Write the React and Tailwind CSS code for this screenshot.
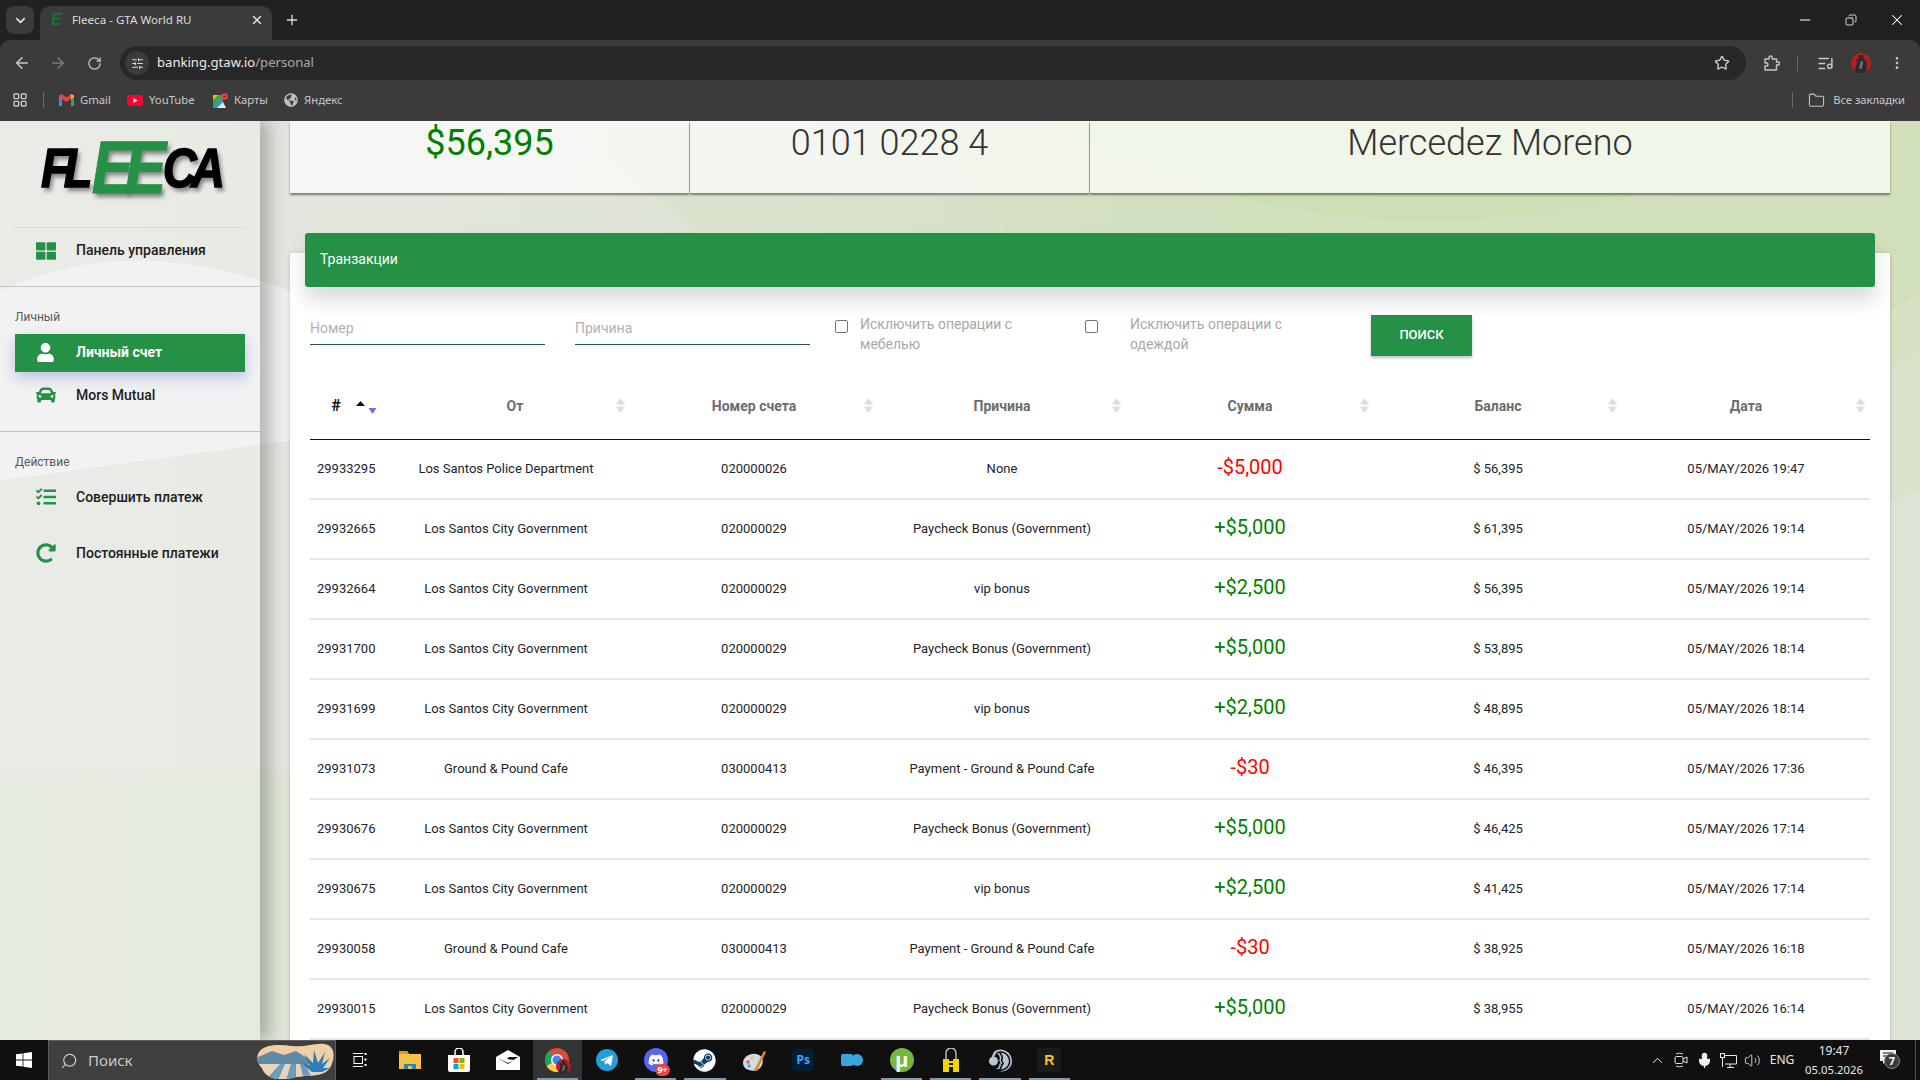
import {
  ArrowLeft, ArrowRight, RotateCw, Star, EllipsisVertical, X, Plus, ChevronDown, ChevronUp,
  SlidersHorizontal, LayoutGrid, Folder, ListMusic, Minus, Search, Mic, Volume2, Copy,
} from 'lucide-react';
import { FaUser, FaCar, FaTasks, FaRedoAlt, FaThLarge, FaDiscord, FaSteam, FaGlobeAmericas } from 'react-icons/fa';
import { SiTeamspeak } from 'react-icons/si';

const GOV = 'Los Santos City Government';
const CAFE = 'Ground & Pound Cafe';
const PAY = 'Paycheck Bonus (Government)';
const BUY = 'Payment - Ground & Pound Cafe';

const rows = [
  ['29933295', 'Los Santos Police Department', '020000026', 'None', '-$5,000', '$ 56,395', '05/MAY/2026 19:47'],
  ['29932665', GOV, '020000029', PAY, '+$5,000', '$ 61,395', '05/MAY/2026 19:14'],
  ['29932664', GOV, '020000029', 'vip bonus', '+$2,500', '$ 56,395', '05/MAY/2026 19:14'],
  ['29931700', GOV, '020000029', PAY, '+$5,000', '$ 53,895', '05/MAY/2026 18:14'],
  ['29931699', GOV, '020000029', 'vip bonus', '+$2,500', '$ 48,895', '05/MAY/2026 18:14'],
  ['29931073', CAFE, '030000413', BUY, '-$30', '$ 46,395', '05/MAY/2026 17:36'],
  ['29930676', GOV, '020000029', PAY, '+$5,000', '$ 46,425', '05/MAY/2026 17:14'],
  ['29930675', GOV, '020000029', 'vip bonus', '+$2,500', '$ 41,425', '05/MAY/2026 17:14'],
  ['29930058', CAFE, '030000413', BUY, '-$30', '$ 38,925', '05/MAY/2026 16:18'],
  ['29930015', GOV, '020000029', PAY, '+$5,000', '$ 38,955', '05/MAY/2026 16:14'],
];

function Bookmark({ icon, label, className }) {
  return (
    <div className={`flex items-center gap-[6px] ${className}`}>
      {icon}
      <span className="text-[11.3px] text-[#c8c8c8]">{label}</span>
    </div>
  );
}

function GmailIcon() {
  return (
    <svg width="15" height="12" viewBox="0 0 15 12">
      <path d="M0 2v10h3V4z" fill="#4285f4" />
      <path d="M15 2v10h-3V4z" fill="#34a853" />
      <path d="M0 1.5 3 0l4.5 3.6L12 0l3 1.5V3L7.5 8 0 3z" fill="#ea4335" />
      <path d="M12 0l3 1.5V3l-3 2z" fill="#fbbc04" />
    </svg>
  );
}

function YoutubeIcon() {
  return (
    <svg width="16" height="11" viewBox="0 0 16 11">
      <rect width="16" height="11" rx="3" fill="#ff0033" />
      <path d="M6.3 3v5l4.2-2.5z" fill="#fff" />
    </svg>
  );
}

function MapsIcon() {
  return (
    <svg width="15" height="15" viewBox="0 0 15 15">
      <path d="M0 2h10v13H0z" fill="#34a853" />
      <path d="M0 15 10 5v10z" fill="#4285f4" />
      <path d="M0 2h5L0 7z" fill="#fbbc04" />
      <path d="M4 15 10 9l3 6z" fill="#e8eaed" />
      <circle cx="11.5" cy="3.5" r="3.3" fill="#ea4335" />
      <circle cx="11.5" cy="3.5" r="1.1" fill="#8f1c14" />
    </svg>
  );
}

function Avatar({ size = 20 }) {
  return (
    <svg width={size} height={size} viewBox="0 0 20 20">
      <circle cx="10" cy="10" r="10" fill="#b3201f" />
      <path d="M8 2h4l1 4 3 3-1 9-3 2H6l-2-3 2-8-1-3 3-1z" fill="#2b2b2d" />
      <path d="M10 8l2 1-1 6-3 1z" fill="#77777a" />
    </svg>
  );
}

function ExtensionIcon() {
  return (
    <svg width="16" height="16" viewBox="0 0 16 16" fill="none" stroke="#c8c8c8" strokeWidth="1.4" strokeLinejoin="round">
      <path d="M1 4H5V2.6A1.6 1.6 0 0 1 8.2 2.6V4H12.5V7H14A1.5 1.5 0 0 1 14 10H12.5V15H1V11H2.5A1.5 1.5 0 0 0 2.5 8H1z" />
    </svg>
  );
}

function BrowserChrome() {
  return (
    <div className="flex h-[121px] flex-col bg-[#202222] font-['Noto_Sans',sans-serif]">
      {/* Tabs */}
      <div className="flex h-[40px] items-end pl-[6px]">
        <div className="mb-[6px] flex h-[28px] w-[28px] items-center justify-center rounded-[8px] bg-[#3b3b3b]">
          <ChevronDown size={15} strokeWidth={2.5} color="#e4e4e4" />
        </div>
        <div className="ml-[6px] flex h-[34px] w-[232px] items-center rounded-t-[10px] bg-[#3b3b3b] pb-[6px] pl-[11px] pr-[8px]">
          <span className="w-[21px] font-['Liberation_Sans',sans-serif] text-[16px] font-bold italic leading-none text-[#13782f]">E</span>
          <span className="flex-1 text-[11.6px] text-[#dddddd]">Fleeca - GTA World RU</span>
          <X size={14} strokeWidth={2.5} color="#e0e0e0" />
        </div>
        <div className="mb-[12px] ml-[12px] flex h-[16px] w-[16px] items-center justify-center">
          <Plus size={16} strokeWidth={2} color="#d8d8d8" />
        </div>
        <div className="mb-[11px] ml-auto flex h-[18px] items-center">
          <div className="flex w-[46px] justify-center"><Minus size={16} strokeWidth={1.5} color="#ffffff" /></div>
          <div className="flex w-[46px] justify-center"><Copy size={12} strokeWidth={1.6} color="#ffffff" className="-scale-x-100" /></div>
          <div className="flex w-[46px] justify-center"><X size={18} strokeWidth={1.4} color="#ffffff" /></div>
        </div>
      </div>
      {/* Toolbar */}
      <div className="flex h-[40px] items-end rounded-t-[10px] bg-[#3b3b3b] pl-[13px]">
        <div className="flex h-[34px] items-center">
          <ArrowLeft size={18} color="#c8c8c8" />
          <ArrowRight size={18} color="#7b7b7b" className="ml-[18px]" />
          <RotateCw size={15} color="#c8c8c8" className="ml-[20px]" />
        </div>
        <div className="ml-[18px] flex h-[34px] w-[1626px] items-center rounded-full bg-[#282828] pl-[5px] pr-[16px]">
          <div className="flex h-[24px] w-[24px] items-center justify-center rounded-full bg-[#3b3b3b]">
            <SlidersHorizontal size={13} color="#d8d8d8" />
          </div>
          <span className="ml-[8px] text-[13.1px] text-[#e8e8e8]">banking.gtaw.io<span className="text-[#a8a8a8]">/personal</span></span>
          <Star size={16} color="#d0d0d0" className="ml-auto" />
        </div>
        <div className="flex h-[34px] items-center">
          <div className="ml-[18px]"><ExtensionIcon /></div>
          <div className="ml-[17px] h-[16px] w-px bg-[#6a6a6a]" />
          <ListMusic size={17} color="#c8c8c8" className="ml-[19px]" />
          <div className="ml-[17px]"><Avatar /></div>
          <EllipsisVertical size={16} color="#c8c8c8" className="ml-[18px]" />
        </div>
      </div>
      {/* Bookmarks */}
      <div className="flex h-[41px] items-center bg-[#3b3b3b] pb-px pl-[12px] pr-[15px]">
        <LayoutGrid size={16} color="#c8c8c8" />
        <div className="ml-[15px] h-[16px] w-px bg-[#6a6a6a]" />
        <Bookmark icon={<GmailIcon />} label="Gmail" className="ml-[15px] w-[68px]" />
        <Bookmark icon={<YoutubeIcon />} label="YouTube" className="w-[86px]" />
        <Bookmark icon={<MapsIcon />} label="Карты" className="w-[71px]" />
        <Bookmark icon={<FaGlobeAmericas size={14} color="#c0c0c0" />} label="Яндекс" />
        <div className="ml-auto h-[16px] w-px bg-[#6a6a6a]" />
        <Folder size={17} strokeWidth={1.5} color="#c8c8c8" className="ml-[15px]" />
        <span className="ml-[8px] text-[11.2px] text-[#c8c8c8]">Все закладки</span>
      </div>
    </div>
  );
}

function PageBackground() {
  return (
    <svg className="absolute inset-0 h-full w-full" viewBox="0 0 1920 920" preserveAspectRatio="none">
      <defs>
        <linearGradient id="bgA" x1="0" x2="1" y1="0" y2="0">
          <stop offset="0" stopColor="#e5e6e1" />
          <stop offset="0.3" stopColor="#e0e5d9" />
          <stop offset="0.65" stopColor="#d4e0c2" />
          <stop offset="1" stopColor="#d0dfb9" />
        </linearGradient>
      </defs>
      <rect width="1920" height="920" fill="url(#bgA)" />
      <path d="M560 0 700 113V920H1920V0z" fill="#d4e0c4" opacity="0.35" />
      <path d="M900 0 1010 113V920H1920V0z" fill="#d0dfb8" opacity="0.35" />
      <circle cx="1430" cy="-700" r="800" fill="#c9e0ad" opacity="0.65" />
      <path d="M1890 190 1920 175V920H1890z" fill="#ffffff" opacity="0.12" />
      <path d="M1890 245 1920 235V920H1890z" fill="#dfe5d6" opacity="0.4" />
      <path d="M1890 380 1920 370V920H1890z" fill="#e2e6dd" opacity="0.6" />
      <path d="M0 170Q130 110 290 170V320L0 360z" fill="#efefef" />
      <path d="M0 653H290V920H0z" fill="#dbe6cf" opacity="0.5" />
    </svg>
  );
}

function Logo() {
  return (
    <div className="flex h-[106px] origin-center scale-x-[0.84] items-center justify-center pb-[12px] font-['Liberation_Sans',sans-serif] font-bold italic [text-shadow:3px_4px_5px_rgba(0,0,0,0.45)]">
      <span className="text-[56px] leading-none tracking-[-7px] text-black [-webkit-text-stroke:1.5px_#000]">FL</span>
      <span className="ml-[6px] text-[74px] leading-none tracking-[-10px] text-[#259147] [-webkit-text-stroke:1px_#259147]">EE</span>
      <span className="ml-[6px] text-[56px] leading-none tracking-[-7px] text-black [-webkit-text-stroke:1.5px_#000]">CA</span>
    </div>
  );
}

function NavItem({ icon, label, height, active }) {
  return (
    <div
      className={`mx-[15px] flex items-center pl-[21px] text-[14px] ${height} ${
        active
          ? 'bg-[#259147] pb-px font-bold text-white shadow-[0_6px_14px_rgba(60,90,200,0.3)]'
          : 'font-medium text-[#212121]'
      }`}
    >
      <span className={`flex w-[40px] ${active ? 'text-white' : 'text-[#259147]'}`}>{icon}</span>
      {label}
    </div>
  );
}

function Sidebar() {
  return (
    <aside className="relative w-[260px] shrink-0 bg-white/20 shadow-[10px_0_14px_rgba(60,70,55,0.32)]">
      <Logo />
      <div className="mx-[15px] h-px bg-[#d8d8d4]" />
      <NavItem icon={<FaThLarge size={20} />} label="Панель управления" height="h-[45px]" />
      <div className="mt-[13px] h-px bg-[#c4c4c4]" />
      <p className="ml-[15px] mt-[22px] h-[16px] text-[12px] leading-[16px] text-[#5a5a5a]">Личный</p>
      <div className="mt-[9px]" />
      <NavItem icon={<FaUser size={19} />} label="Личный счет" height="h-[38px]" active />
      <NavItem icon={<FaCar size={20} />} label="Mors Mutual" height="h-[46px]" />
      <div className="mt-[13px] h-px bg-[#c4c4c4]" />
      <p className="ml-[15px] mt-[22px] h-[16px] text-[12px] leading-[16px] text-[#5a5a5a]">Действие</p>
      <NavItem icon={<FaTasks size={20} />} label="Совершить платеж" height="h-[54px]" />
      <NavItem icon={<FaRedoAlt size={20} />} label="Постоянные платежи" height="h-[58px]" />
    </aside>
  );
}

function SortIcon({ active }) {
  if (active) {
    return (
      <svg width="21" height="15" viewBox="0 0 21 15" className="absolute right-[5px] top-[26px]">
        <path d="M0 6 4.5 1 9 6z" fill="#111" />
        <path d="M12.5 8h8l-4 6z" fill="#6f74d8" />
      </svg>
    );
  }
  return (
    <svg width="9" height="15" viewBox="0 0 9 15" className="absolute right-[5px] top-[24px]">
      <path d="M0 6.5 4.5 0 9 6.5z" fill="#dcdcdc" />
      <path d="M0 8.5h9L4.5 15z" fill="#dcdcdc" />
    </svg>
  );
}

function Head({ children, className = '' }) {
  return (
    <th className={`relative h-[66px] border-b-[1.5px] border-[#111] p-0 pb-px text-center text-[14px] font-bold text-[#6c6c6c] ${className}`}>
      {children}
      <SortIcon />
    </th>
  );
}

function Filters() {
  const field = 'h-[31px] w-[235px] border-b border-[#1f5a3c] bg-transparent pb-[2px] text-[14px] outline-none placeholder:text-[#b2b2b2]';
  const box = 'mt-[6px] h-[13px] w-[13px] shrink-0 rounded-[2px] border border-[#767676] bg-white';
  const text = 'text-[14px] leading-[20px] text-[#a8a8a8]';
  return (
    <div className="mt-[27px] flex items-start px-[20px]">
      <input className={field} placeholder="Номер" />
      <input className={`${field} ml-[30px]`} placeholder="Причина" />
      <div className={`${box} ml-[25px]`} />
      <p className={`${text} ml-[12px] w-[213px]`}>Исключить операции с<br />мебелью</p>
      <div className={`${box} ml-[12px]`} />
      <p className={`${text} ml-[32px] w-[241px]`}>Исключить операции с<br />одеждой</p>
      <button className="mt-px h-[41px] w-[101px] bg-[#259147] pb-px text-[13px] font-medium text-white shadow-[0_2px_3px_rgba(0,0,0,0.25)]">
        ПОИСК
      </button>
    </div>
  );
}

function TransactionsTable() {
  const cell = 'h-[60px] border-b-2 border-[#e5e5e5]';
  return (
    <table className="ml-[20px] mt-[18px] w-[1560px] table-fixed border-separate border-spacing-0 text-[13px] text-[#212529]">
      <colgroup>
        <col className="w-[72px]" />
        <col className="w-[248px]" />
        <col className="w-[248px]" />
        <col className="w-[248px]" />
        <col className="w-[248px]" />
        <col className="w-[248px]" />
        <col className="w-[248px]" />
      </colgroup>
      <thead>
        <tr>
          <th className="relative h-[66px] border-b-[1.5px] border-[#111] p-0 pb-px pr-[20px] text-center text-[16px] font-bold text-[#111]">
            #
            <SortIcon active />
          </th>
          <Head className="pl-[18px]">От</Head>
          <Head>Номер счета</Head>
          <Head>Причина</Head>
          <Head>Сумма</Head>
          <Head>Баланс</Head>
          <Head>Дата</Head>
        </tr>
      </thead>
      <tbody>
        {rows.map((r) => (
          <tr key={r[0]}>
            <td className={`${cell} pl-[7px]`}>{r[0]}</td>
            <td className={`${cell} text-center`}>{r[1]}</td>
            <td className={`${cell} text-center`}>{r[2]}</td>
            <td className={`${cell} text-center`}>{r[3]}</td>
            <td className={`${cell} pb-[4px] text-center text-[20px] ${r[4][0] === '-' ? 'text-[#ff0000]' : 'text-[#008000]'}`}>
              {r[4]}
            </td>
            <td className={`${cell} text-center`}>{r[5]}</td>
            <td className={`${cell} text-center`}>{r[6]}</td>
          </tr>
        ))}
      </tbody>
    </table>
  );
}

function Content() {
  return (
    <main className="relative flex min-w-0 flex-1 flex-col px-[30px]">
      {/* Summary cards */}
      <div className="flex h-[72px] shrink-0 gap-px text-center text-[36px] font-light leading-[44px] text-[#333]">
        <div className="w-[399px] bg-white/70 font-normal text-[#008000] shadow-[0_2px_2px_rgba(0,0,0,0.45)]">$56,395</div>
        <div className="w-[399px] bg-white/70 shadow-[0_2px_2px_rgba(0,0,0,0.45)]">0101 0228 4</div>
        <div className="flex-1 bg-white/70 shadow-[0_2px_2px_rgba(0,0,0,0.45)]">Mercedez Moreno</div>
      </div>
      {/* Transactions */}
      <section className="mt-[60px] flex-1 bg-white shadow-[0_1px_4px_rgba(0,0,0,0.2)]">
        <div className="mx-[15px] -mt-[20px] flex h-[54px] items-center rounded-[3px] bg-[#259147] px-[15px] pb-[2px] text-[14px] text-white shadow-[0_14px_20px_rgba(0,0,0,0.14)]">
          Транзакции
        </div>
        <Filters />
        <TransactionsTable />
      </section>
    </main>
  );
}

function TaskSlot({ children, running, active }) {
  return (
    <div className={`relative flex h-full w-[49.2px] items-center justify-center ${active ? 'bg-[#333]' : ''}`}>
      {children}
      {running && <div className="absolute bottom-0 left-[4px] right-[4px] h-[2px] bg-[#8a9aa8]" />}
    </div>
  );
}

function Landscape() {
  return (
    <svg width="78" height="38" viewBox="0 0 78 38" className="shrink-0">
      <defs>
        <clipPath id="blob">
          <path d="M2 12C6 2 22 2 36 4 50 6 62-1 72 3 80 7 79 20 72 28 64 36 50 32 36 36 20 39 10 36 6 26 2 22 0 17 2 12z" />
        </clipPath>
      </defs>
      <g clipPath="url(#blob)">
        <rect width="78" height="38" fill="#f0cfa6" />
        <path d="M0 16 16 9l12 4 12-4 14 9v6H0z" fill="#5f8aa6" />
        <rect y="22" width="78" height="16" fill="#e6d5bc" />
        <path d="M10 38 24 22h5L22 38zM30 38l5-16h5l0 16zM48 38 44 22h5l8 16z" fill="#6d9cbb" />
        <path d="M56 30 44 20l10 3-6-11 9 9 1-13 4 13 7-11-3 12 8-6-7 10 7 0-8 4z" fill="#2c7fb4" />
      </g>
    </svg>
  );
}

function Taskbar() {
  return (
    <footer className="relative flex h-[40px] shrink-0 items-center bg-[#101010] font-['Noto_Sans',sans-serif] text-white">
      <div className="flex h-full w-[48px] items-center justify-center">
        <svg width="16" height="16" viewBox="0 0 16 16" fill="#fff">
          <path d="M0 2.3 6.6 1.4V7.6H0zM7.4 1.3 16 0V7.6H7.4zM0 8.4H6.6V14.6L0 13.7zM7.4 8.4H16V16L7.4 14.7z" />
        </svg>
      </div>
      <div className="flex h-full w-[288px] items-center border border-b-0 border-[#5e5e5e] bg-[#3f3f3f] pl-[11px]">
        <Search size={18} strokeWidth={1.4} color="#ddd" className="-scale-x-100" />
        <span className="ml-[10px] text-[15px] text-[#c9c9c9]">Поиск</span>
        <div className="ml-auto mr-[1px]"><Landscape /></div>
      </div>
      <TaskSlot>
        <svg width="16" height="16" viewBox="0 0 16 16" fill="none" stroke="#fff">
          <path d="M0 1.5H10M0 14.5H10" />
          <rect x="1" y="4.5" width="8.5" height="7" />
          <path d="M12.5 1v2M12.5 6.5v2M12.5 12v2" strokeWidth="2" />
        </svg>
      </TaskSlot>
      <TaskSlot>
        <svg width="22" height="20" viewBox="0 0 22 20">
          <path d="M0 1h8l2 3h12v15H0z" fill="#f6c244" />
          <path d="M0 1h8l2 3H0z" fill="#d99a1f" />
          <path d="M5 14h12v5H5z" fill="#1e88c9" />
          <rect x="9" y="16" width="4" height="3" fill="#f6c244" />
        </svg>
      </TaskSlot>
      <TaskSlot>
        <svg width="24" height="24" viewBox="0 0 24 24">
          <path d="M1 7h22v15a2 2 0 0 1-2 2H3a2 2 0 0 1-2-2z" fill="#fff" />
          <path d="M8 7V4a4 4 0 0 1 8 0v3" fill="none" stroke="#fff" strokeWidth="1.5" />
          <rect x="6.5" y="10" width="5" height="5" fill="#f25022" />
          <rect x="12.5" y="10" width="5" height="5" fill="#7fba00" />
          <rect x="6.5" y="16" width="5" height="5" fill="#00a4ef" />
          <rect x="12.5" y="16" width="5" height="5" fill="#ffb900" />
        </svg>
      </TaskSlot>
      <TaskSlot>
        <svg width="24" height="20" viewBox="0 0 24 20">
          <path d="M0 7 12 0l12 7v13H0z" fill="#fff" />
          <path d="M1 7.5 12 13l6-3-7-1 2-2 9 0-10 7z" fill="#101010" />
        </svg>
      </TaskSlot>
      <TaskSlot active running>
        <div className="relative h-[24px] w-[24px]">
          <svg width="24" height="24" viewBox="0 0 24 24">
            <circle cx="12" cy="12" r="12" fill="#dd4b39" />
            <path d="M12 12 1.6 18A12 12 0 0 1 3.5 3.5z" fill="#1da462" />
            <path d="M12 12 22.4 18A12 12 0 0 1 1.6 18z" fill="#ffcd46" />
            <circle cx="12" cy="12" r="5.3" fill="#4285f4" stroke="#fff" strokeWidth="1.5" />
          </svg>
          <div className="absolute -bottom-[2px] -right-[2px]"><Avatar size={15} /></div>
        </div>
      </TaskSlot>
      <TaskSlot>
        <svg width="22" height="22" viewBox="0 0 22 22">
          <circle cx="11" cy="11" r="11" fill="#229ed9" />
          <path d="M4 11 17 6l-2 11-4-3-2 2-.5-3.5 6-5-7.5 4.5z" fill="#fff" />
        </svg>
      </TaskSlot>
      <TaskSlot running>
        <div className="relative flex h-[24px] w-[24px] items-center justify-center rounded-full bg-[#5865f2]">
          <FaDiscord size={16} color="#fff" />
          <span className="absolute -bottom-[4px] -right-[2px] rounded-full bg-[#ed4245] px-[2px] text-[9px] font-bold leading-[12px] text-white">9+</span>
        </div>
      </TaskSlot>
      <TaskSlot running>
        <FaSteam size={23} color="#fff" className="rounded-full bg-[#0d3d68]" />
      </TaskSlot>
      <TaskSlot>
        <svg width="25" height="25" viewBox="0 0 25 25">
          <path d="M1 15C1 9 8 5 14 6c6 1 8 6 6 11-2 5-8 7-13 5-4-1-6-4-6-7z" fill="#cfdde8" />
          <circle cx="6" cy="14" r="1.7" fill="#e85b4a" />
          <circle cx="10" cy="10" r="1.7" fill="#f5c23d" />
          <circle cx="7" cy="18" r="1.7" fill="#4aa5dd" />
          <path d="M12 22 22 3l2 1-9 19z" fill="#e28b2a" />
        </svg>
      </TaskSlot>
      <TaskSlot>
        <div className="flex h-[22px] w-[22px] items-center justify-center rounded-[3px] bg-[#001e36] text-[12px] font-bold text-[#31a8ff]">Ps</div>
      </TaskSlot>
      <TaskSlot>
        <svg width="22" height="12" viewBox="0 0 22 12">
          <rect width="12" height="12" rx="2" fill="#3aa6dd" />
          <circle cx="16" cy="6" r="6" fill="#3aa6dd" />
        </svg>
      </TaskSlot>
      <TaskSlot running>
        <div className="flex h-[24px] w-[24px] items-center justify-center rounded-full bg-[#76b83f] text-[20px] font-bold leading-none text-white">µ</div>
      </TaskSlot>
      <TaskSlot running>
        <svg width="16" height="24" viewBox="0 0 16 24">
          <path d="M3 12V5a5 5 0 0 1 10 0v7" fill="none" stroke="#cfcfcf" strokeWidth="1.3" />
          <path d="M0 11h6v13H0zM10 11h6v13h-6z" fill="#f2d500" />
          <path d="M6 14h4M6 18h4" stroke="#f2d500" strokeWidth="2" />
        </svg>
      </TaskSlot>
      <TaskSlot running>
        <SiTeamspeak size={23} color="#b8c6d4" />
      </TaskSlot>
      <TaskSlot running>
        <div className="flex h-[24px] w-[24px] items-center justify-center bg-[#1a1a1a] font-['Liberation_Sans',sans-serif] text-[14px] font-bold text-[#f4c430]">R</div>
      </TaskSlot>

      {/* Tray */}
      <div className="ml-auto flex h-full items-center">
        <div className="flex w-[24px] justify-center"><ChevronUp size={17} strokeWidth={1.4} color="#e8e8e8" /></div>
        <div className="flex w-[24px] justify-center">
          <svg width="14" height="16" viewBox="0 0 14 16" fill="none" stroke="#e8e8e8">
            <rect x="1" y="4.5" width="8" height="7" rx="1.5" />
            <path d="M9 7l4-2v6l-4-2M2 2c2-1 5-1 7 0M2 14c2 1 5 1 7 0" />
          </svg>
        </div>
        <div className="flex w-[23px] justify-center"><Mic size={17} strokeWidth={1.6} color="#f0f0f0" fill="#f0f0f0" /></div>
        <div className="flex w-[25px] justify-center">
          <svg width="17" height="15" viewBox="0 0 17 15" fill="none" stroke="#e8e8e8">
            <path d="M4 2.5H16.5V11H5M10 11v3M7 14.5h7" />
            <rect x="0.5" y="0.5" width="4" height="4" />
            <path d="M2.5 4.5V14" />
          </svg>
        </div>
        <div className="flex w-[23px] justify-center"><Volume2 size={17} strokeWidth={1.2} color="#e8e8e8" /></div>
        <div className="flex w-[36px] justify-center text-[12px] text-[#e8e8e8]">ENG</div>
        <div className="flex w-[68px] flex-col items-center text-[11.3px] leading-[19px] text-[#e8e8e8]">
          <span className="text-[12px]">19:47</span>
          <span>05.05.2026</span>
        </div>
        <div className="relative flex w-[42px] justify-center">
          <svg width="16" height="14" viewBox="0 0 16 14" className="mr-[3px] mt-[-6px]">
            <path d="M0 0H16V11H6L3 14V11H0z" fill="#f2f2f2" />
            <path d="M3 3H13M3 6H13" stroke="#101010" />
          </svg>
          <span className="absolute left-[16px] top-[-3px] flex h-[16px] w-[16px] items-center justify-center rounded-full border border-[#888] bg-[#3a3a3a] text-[11px] font-bold">7</span>
        </div>
        <div className="ml-[5px] h-full w-[5px] border-l border-[#555]" />
      </div>
    </footer>
  );
}

export default function App() {
  return (
    <div className="flex h-screen w-screen flex-col overflow-hidden font-['Roboto',sans-serif]">
      <BrowserChrome />
      <div className="relative flex min-h-0 flex-1 overflow-hidden">
        <PageBackground />
        <Sidebar />
        <Content />
      </div>
      <Taskbar />
    </div>
  );
}
